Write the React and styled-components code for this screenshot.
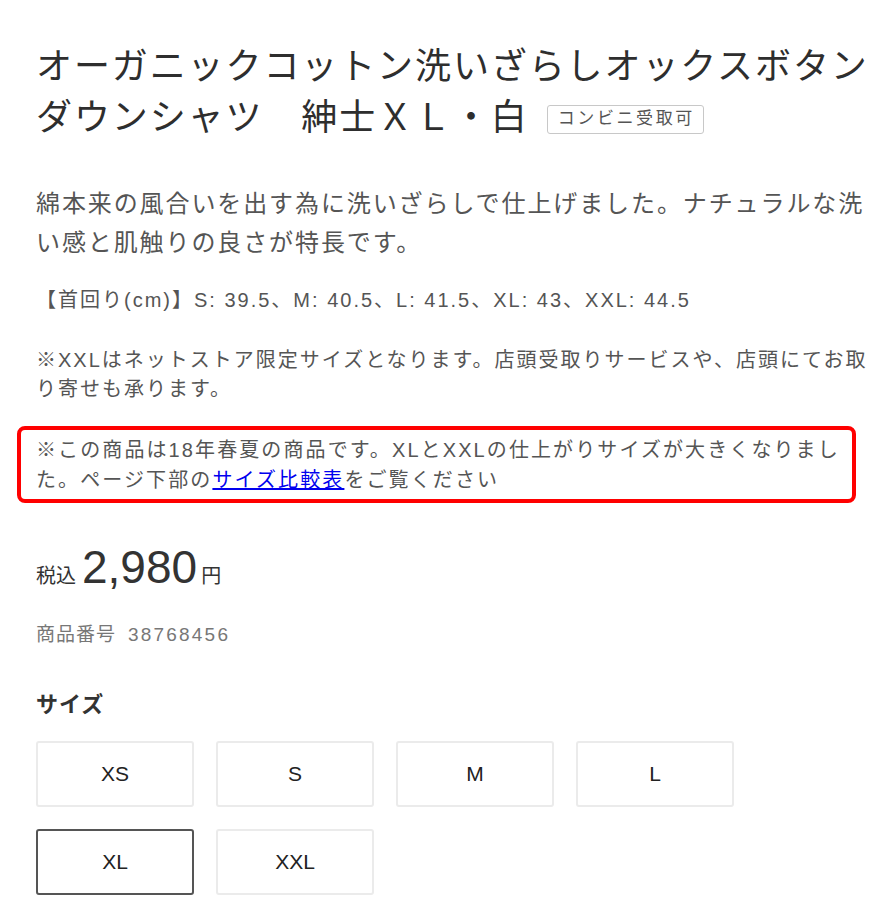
import styled, { createGlobalStyle } from "styled-components";

const GlobalStyle = createGlobalStyle`
  html, body {
    margin: 0;
    padding: 0;
    background: #fff;
  }
  body {
    font-family: "Liberation Sans", "Noto Sans CJK JP", sans-serif;
    color: #333;
  }
`;

const sizes = ["XS", "S", "M", "L", "XL", "XXL"];

const App = () => {
  return (
    <>
      <GlobalStyle />
      <Page>
        <Title>
          オーガニックコットン洗いざらしオックスボタンダウンシャツ　紳士ＸＬ・白
          <Badge>コンビニ受取可</Badge>
        </Title>

        <Lead>
          綿本来の風合いを出す為に洗いざらしで仕上げました。ナチュラルな洗い感と肌触りの良さが特長です。
        </Lead>

        <Note>【首回り(cm)】S: 39.5、M: 40.5、L: 41.5、XL: 43、XXL: 44.5</Note>

        <Note $gap={31}>
          ※XXLはネットストア限定サイズとなります。店頭受取りサービスや、店頭にてお取り寄せも承ります。
        </Note>

        <Notice>
          ※この商品は18年春夏の商品です。XLとXXLの仕上がりサイズが大きくなりました。ページ下部の
          <CompareLink href="#size">サイズ比較表</CompareLink>
          をご覧ください
        </Notice>

        <PriceRow>
          <Small>税込</Small>
          <Price>2,980</Price>
          <Small>円</Small>
        </PriceRow>

        <ItemNo>
          商品番号<Num>38768456</Num>
        </ItemNo>

        <SizeLabel>サイズ</SizeLabel>
        <SizeGrid>
          {sizes.map((s) => (
            <SizeButton key={s} $active={s === "XL"}>
              {s}
            </SizeButton>
          ))}
        </SizeGrid>
      </Page>
    </>
  );
};

const Page = styled.div`
  width: 890px;
  box-sizing: border-box;
  padding: 41px 20px 40px 36px;
`;

const Title = styled.h1`
  margin: 0;
  font-size: 36px;
  font-weight: 400;
  letter-spacing: 1.9px;
  line-height: 51px;
  color: #2e2e2e;
`;

const Badge = styled.span`
  display: inline-block;
  margin-left: 18px;
  padding: 0 8px 0 10px;
  height: 29px;
  box-sizing: border-box;
  border: 1.5px solid #c8c8c8;
  border-radius: 3px;
  font-size: 17px;
  letter-spacing: 2.6px;
  line-height: 26px;
  color: #555;
  vertical-align: 6px;
`;

const Lead = styled.p`
  margin: 41px 0 0;
  font-size: 24px;
  letter-spacing: 1.9px;
  line-height: 39px;
  color: #555;
`;

const Note = styled.p`
  margin: ${(p) => p.$gap || 24}px 0 0;
  font-size: 20px;
  letter-spacing: 2px;
  line-height: 29px;
  color: #555;
`;

const Notice = styled.p`
  margin: 22px 0 0 -19px;
  padding: 5px 10px 4px 15px;
  width: 839px;
  box-sizing: border-box;
  border: 4px solid #ff0000;
  border-radius: 8px;
  font-size: 20px;
  letter-spacing: 2.1px;
  line-height: 30px;
  color: #555;
`;

const CompareLink = styled.a`
  color: #0000ee;
  text-decoration: underline;
`;

const PriceRow = styled.div`
  margin-top: 41px;
  display: flex;
  align-items: baseline;
  height: 46px;
  line-height: 46px;
  color: #333;
`;

const Small = styled.span`
  font-size: 20px;
`;

const Price = styled.span`
  font-size: 46px;
  margin: 0 4px 0 6px;
`;

const ItemNo = styled.div`
  margin-top: 31px;
  font-size: 19px;
  letter-spacing: 1px;
  line-height: 27px;
  color: #777;
`;

const Num = styled.span`
  margin-left: 12px;
  letter-spacing: 2.2px;
`;

const SizeLabel = styled.h2`
  margin: 42px 0 0;
  font-size: 22px;
  font-weight: 700;
  letter-spacing: 1px;
  line-height: 30px;
  color: #333;
`;

const SizeGrid = styled.div`
  margin-top: 21px;
  display: grid;
  grid-template-columns: repeat(4, 158px);
  gap: 22px;
`;

const SizeButton = styled.button`
  height: 66px;
  background: #fff;
  border: 2px solid ${(p) => (p.$active ? "#555" : "#ebebeb")};
  border-radius: 3px;
  font-family: "Liberation Sans", "Noto Sans CJK JP", sans-serif;
  font-size: 21px;
  color: #222;
  cursor: pointer;
`;

export default App;
